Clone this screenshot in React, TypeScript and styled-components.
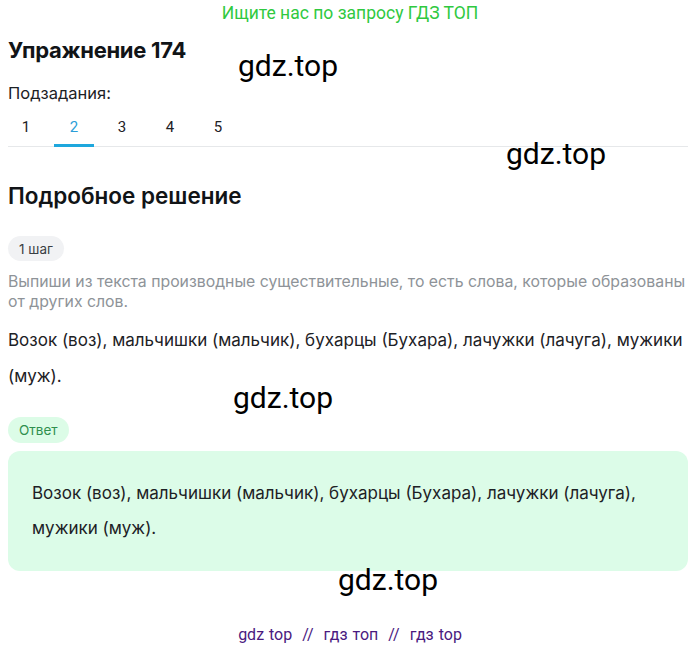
import React, { useState } from "react";
import styled, { createGlobalStyle } from "styled-components";

const GlobalStyle = createGlobalStyle`
  body {
    margin: 0;
    background: #fff;
    font-family: Inter, "Noto Sans", sans-serif;
    color: #1d2125;
  }
`

const Page = styled.div`
  position: relative;
  width: 680px;
  padding: 0 12px 0 8px;
  height: 650px;
  overflow: hidden;
`

const Promo = styled.div`
  font-family: Roboto, sans-serif;
  font-size: 17.5px;
  color: #2fc93f;
  text-align: center;
  margin: 0 -12px 0 -8px;
  padding-top: 2px;
  line-height: 22px;
`

const Title = styled.h1`
  margin: 13px 0 0;
  font-size: 22px;
  font-weight: 700;
  letter-spacing: -0.3px;
  color: #111417;
  line-height: 26px;
`

const SubLabel = styled.div`
  margin-top: 20px;
  font-size: 16.5px;
  line-height: 20px;
  color: #1d2125;
`

const TabBar = styled.div`
  margin-top: 6px;
  border-bottom: 1px solid #e6e8ea;
`

const TabList = styled.div`
  display: flex;
  gap: 8px;
  margin-left: -2px;
`

const Tab = styled.button<{ active: boolean }>`
  width: 40px;
  height: 38px;
  border: none;
  background: none;
  padding: 0;
  font-family: Roboto, sans-serif;
  font-size: 15px;
  color: ${p => p.active ? "#2b9ed8" : "#1d2125"};
  cursor: pointer;
  display: flex;
  justify-content: center;
  align-items: center;
  border-bottom: 3px solid ${p => p.active ? "#1ea7dd" : "transparent"};
  margin-bottom: -1px;
`

const SectionTitle = styled.h2`
  margin: 35px 0 0;
  font-size: 22.5px;
  font-weight: 600;
  color: #111417;
  line-height: 28px;
`

const Pill = styled.span<{ tone: "gray" | "green" }>`
  display: inline-flex;
  align-items: center;
  height: ${p => p.tone === "gray" ? 25 : 26}px;
  padding: 0 11px;
  border-radius: 13px;
  font-size: 13.5px;
  background: ${p => p.tone === "gray" ? "#f1f2f4" : "#dcfce7"};
  color: ${p => p.tone === "gray" ? "#3a3f44" : "#2f8f4e"};
`

const PillRow = styled.div<{ gap: number }>`
  display: flex;
  margin-top: ${p => p.gap}px;
`

const Hint = styled.p`
  margin: 11px 0 0;
  font-size: 15.8px;
  line-height: 20px;
  color: #8e9398;
`

const Solution = styled.p`
  margin: 10px 0 0;
  font-size: 17px;
  line-height: 36px;
  color: #1d2125;
`

const AnswerBox = styled.div`
  margin-top: 8px;
  background: #dcfce8;
  border-radius: 12px;
  padding: 25px 24px 25px;
  font-size: 17px;
  line-height: 35px;
  color: #1d2125;
`

const Footer = styled.div`
  font-family: Roboto, sans-serif;
  font-size: 16px;
  color: #4a1a7f;
  text-align: center;
  margin: 54px -12px 0 -8px;
  line-height: 20px;
  word-spacing: 1px;
`

const Watermark = styled.div<{ x: number; y: number }>`
  position: absolute;
  left: ${p => p.x}px;
  top: ${p => p.y}px;
  font-family: Roboto, sans-serif;
  font-size: 30px;
  color: #000;
  pointer-events: none;
`

export default function App() {
  const [active, setActive] = useState(2)
  const text = "Возок (воз), мальчишки (мальчик), бухарцы (Бухара), лачужки (лачуга), мужики (муж)."

  return <Page>
    <GlobalStyle />
    <Promo>Ищите нас по запросу ГДЗ ТОП</Promo>
    <Title>Упражнение 174</Title>
    <SubLabel>Подзадания:</SubLabel>
    <TabBar>
      <TabList>
        {[1, 2, 3, 4, 5].map(n =>
          <Tab key={n} active={n === active} onClick={() => setActive(n)}>{n}</Tab>
        )}
      </TabList>
    </TabBar>
    <SectionTitle>Подробное решение</SectionTitle>
    <PillRow gap={26}>
      <Pill tone="gray">1 шаг</Pill>
    </PillRow>
    <Hint>Выпиши из текста производные существительные, то есть слова, которые образованы от других слов.</Hint>
    <Solution>{text}</Solution>
    <PillRow gap={23}>
      <Pill tone="green">Ответ</Pill>
    </PillRow>
    <AnswerBox>{text}</AnswerBox>
    <Footer>gdz top&nbsp; // &nbsp;гдз топ&nbsp; // &nbsp;гдз top</Footer>

    <Watermark x={238} y={48}>gdz.top</Watermark>
    <Watermark x={506} y={136}>gdz.top</Watermark>
    <Watermark x={233} y={380}>gdz.top</Watermark>
    <Watermark x={338} y={562}>gdz.top</Watermark>
  </Page>
}
